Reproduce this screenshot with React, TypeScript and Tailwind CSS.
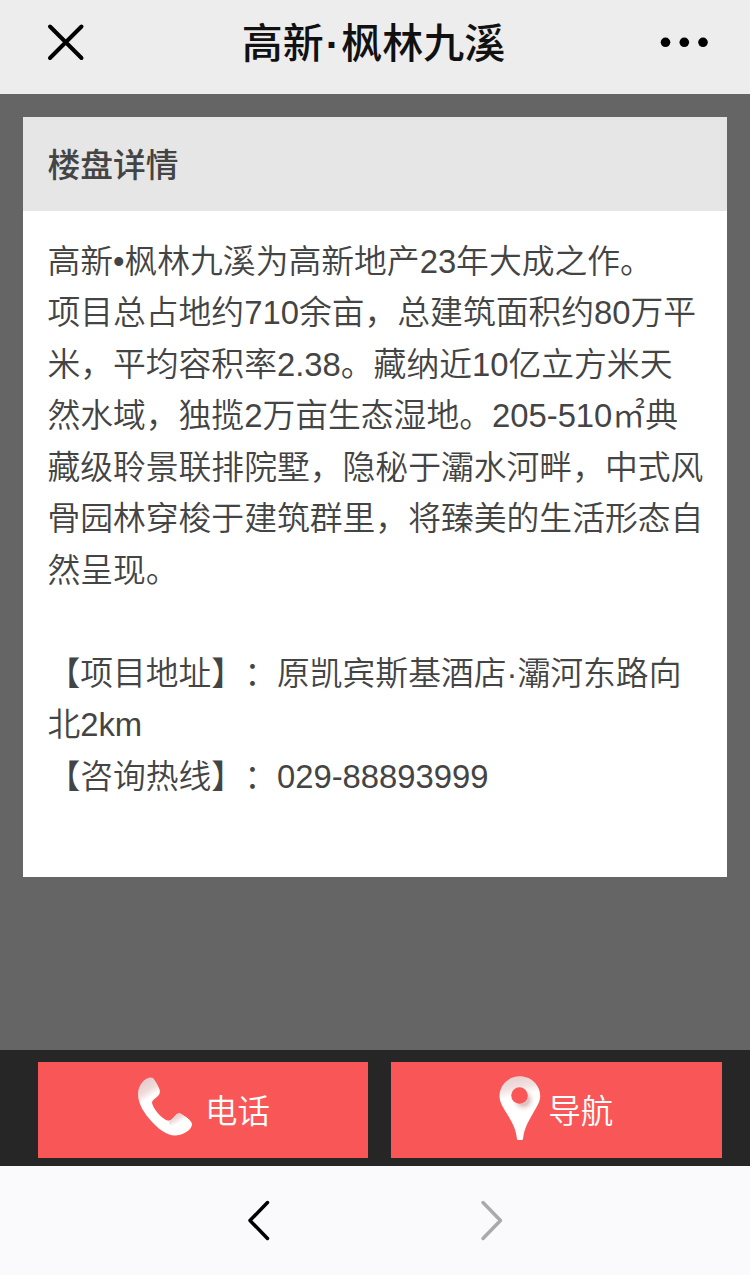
import React from "react";

const PhoneIcon = () => (
  <svg width="56" height="60" viewBox="0 0 56 60" fill="none">
    <defs>
      <linearGradient id="phoneTop" x1="8" y1="6" x2="17" y2="20" gradientUnits="userSpaceOnUse">
        <stop offset="0" stopColor="#e6cccc" />
        <stop offset="0.55" stopColor="#f0dcdc" />
        <stop offset="1" stopColor="#ffffff" />
      </linearGradient>
      <linearGradient id="phoneEar" x1="38" y1="38" x2="43" y2="47" gradientUnits="userSpaceOnUse">
        <stop offset="0" stopColor="#e0c4c4" />
        <stop offset="0.5" stopColor="#eedada" />
        <stop offset="1" stopColor="#ffffff" />
      </linearGradient>
    </defs>
    <path
      d="M14.300 1.600C8.500 2 2.300 9 2 17.500C1.800 25 5.500 34 13.500 43C21.500 52.500 30.500 59.500 39 59.500C46 59.500 54.500 55 55.800 49.500C56.300 47.500 55.500 45.800 53.800 44.300Q49.500 40.500 45.200 38.100C43.500 37.200 41.500 37.600 40 38.800C37.500 41.500 36 44.300 32.500 44.800C26 43.500 17.500 33 16 27C16 23.500 20.500 22.200 22.800 19C24.200 17 24 15 23.400 13Q21.500 8 18.200 3.500C17.200 2.200 16 1.500 14.300 1.600Z"
      fill="url(#phoneTop)"
    />
    <path
      d="M32.500 44.800C36 44.300 37.500 41.500 40 38.800C41.500 37.600 43.500 37.200 45.200 38.100Q49.500 40.500 53.800 44.300C48 44 43 51 34 49Z"
      fill="url(#phoneEar)"
    />
  </svg>
);

const PinIcon = () => (
  <svg width="42" height="64" viewBox="0 0 42 64" fill="none">
    <defs>
      <linearGradient id="pinBody" x1="17" y1="0" x2="21" y2="20" gradientUnits="userSpaceOnUse">
        <stop offset="0" stopColor="#e9cfcf" />
        <stop offset="0.5" stopColor="#f0dede" />
        <stop offset="1" stopColor="#ffffff" />
      </linearGradient>
      <radialGradient id="pinShade" cx="24.500" cy="24" r="13" gradientUnits="userSpaceOnUse">
        <stop offset="0.4" stopColor="#dfc3c3" />
        <stop offset="1" stopColor="#ffffff" stopOpacity="0" />
      </radialGradient>
    </defs>
    <path
      d="M20.800 0.300C9.500 0.300 0.500 9 0.500 20C0.500 26 4 31.500 7.500 37C13 46 17 53 17.900 62.500Q18 64 19 64H22.500Q24 64 24.100 62.500C25 53 29 46 34.200 37C37.500 31 41.200 26 41.200 20C41.200 9 32 0.300 20.800 0.300Z"
      fill="url(#pinBody)"
    />
    <circle cx="24.500" cy="24" r="13" fill="url(#pinShade)" />
    <circle cx="20.500" cy="19.500" r="8.300" fill="#f95757" />
  </svg>
);

const App = () => {
  return (
    <div className="flex h-[1275px] w-[750px] flex-col overflow-hidden bg-[#656565] font-['Liberation_Sans','Noto_Sans_CJK_SC',sans-serif]">
      {/* Title bar */}
      <header className="flex h-[94px] shrink-0 items-start justify-between bg-[#ededed] pt-[23px] pr-[41px] pl-[47px]">
        <svg width="38" height="38" viewBox="0 0 38 38" stroke="#000" strokeWidth="4" strokeLinecap="round">
          <path d="M3 3.500L34.500 35M34.500 3.500L3 35" />
        </svg>
        <h1 className="-mt-[9px] ml-[3px] text-[41px] leading-[60px] font-medium whitespace-nowrap text-[#111]">
          高新<span className="mx-[2px] align-[-1px] leading-none font-bold">·</span>枫林九溪
        </h1>
        <svg width="50" height="38" viewBox="0 0 50 38" fill="#000">
          <circle cx="6.500" cy="19.300" r="4.800" />
          <circle cx="25.300" cy="19.300" r="4.800" />
          <circle cx="44" cy="19.300" r="4.800" />
        </svg>
      </header>

      {/* Details */}
      <main className="flex-1 px-[23.400px] pt-[23.400px]">
        <section className="h-[759.400px] bg-white text-[#444]">
          <h2 className="h-[93.400px] bg-[#e6e6e6] pl-[24px] text-[32.800px] leading-[97px] font-medium">
            楼盘详情
          </h2>
          <div className="pt-[25px] pr-[22.800px] pl-[24px] text-[32.800px] leading-[51.500px] font-[350] [text-spacing-trim:space-all]">
            <p>高新•枫林九溪为高新地产23年大成之作。</p>
            <p>
              项目总占地约710余亩，总建筑面积约80万平米，平均容积率2.38。藏纳近10亿立方米天然水域，独揽2万亩生态湿地。205-510㎡典藏级聆景联排院墅，隐秘于灞水河畔，中式风骨园林穿梭于建筑群里，将臻美的生活形态自然呈现。
            </p>
            <br />
            <p>【项目地址】：原凯宾斯基酒店·灞河东路向北2km</p>
            <p>【咨询热线】：029-88893999</p>
          </div>
        </section>
      </main>

      {/* Actions */}
      <div className="grid h-[116px] shrink-0 grid-cols-2 gap-[23px] bg-[#262626] pt-3 pr-[28px] pb-2 pl-[37.500px] text-[32.500px] text-white">
        <button className="flex items-center bg-[#f95757] pl-[98.500px]">
          <span className="-mt-[8px]">
            <PhoneIcon />
          </span>
          <span className="mt-[4px] ml-[13px] font-[350]">电话</span>
        </button>
        <button className="flex items-center bg-[#f95757] pl-[108px]">
          <span className="-mt-[4px]">
            <PinIcon />
          </span>
          <span className="mt-[4px] ml-[7px] font-[350]">导航</span>
        </button>
      </div>

      {/* Browser navigation */}
      <nav className="flex h-[109px] shrink-0 items-start justify-center gap-[209px] bg-[#fafafc] pt-[34px]">
        <svg width="24" height="42" viewBox="0 0 24 42" fill="none" stroke="#000" strokeWidth="3.500" strokeLinecap="round" strokeLinejoin="round">
          <path d="M20.500 2.500L3 20.500L20.500 38.500" />
        </svg>
        <svg width="24" height="42" viewBox="0 0 24 42" fill="none" stroke="#aaa" strokeWidth="3.500" strokeLinecap="round" strokeLinejoin="round">
          <path d="M3 2.500L20.500 20.500L3 38.500" />
        </svg>
      </nav>
    </div>
  );
};

export default App;
